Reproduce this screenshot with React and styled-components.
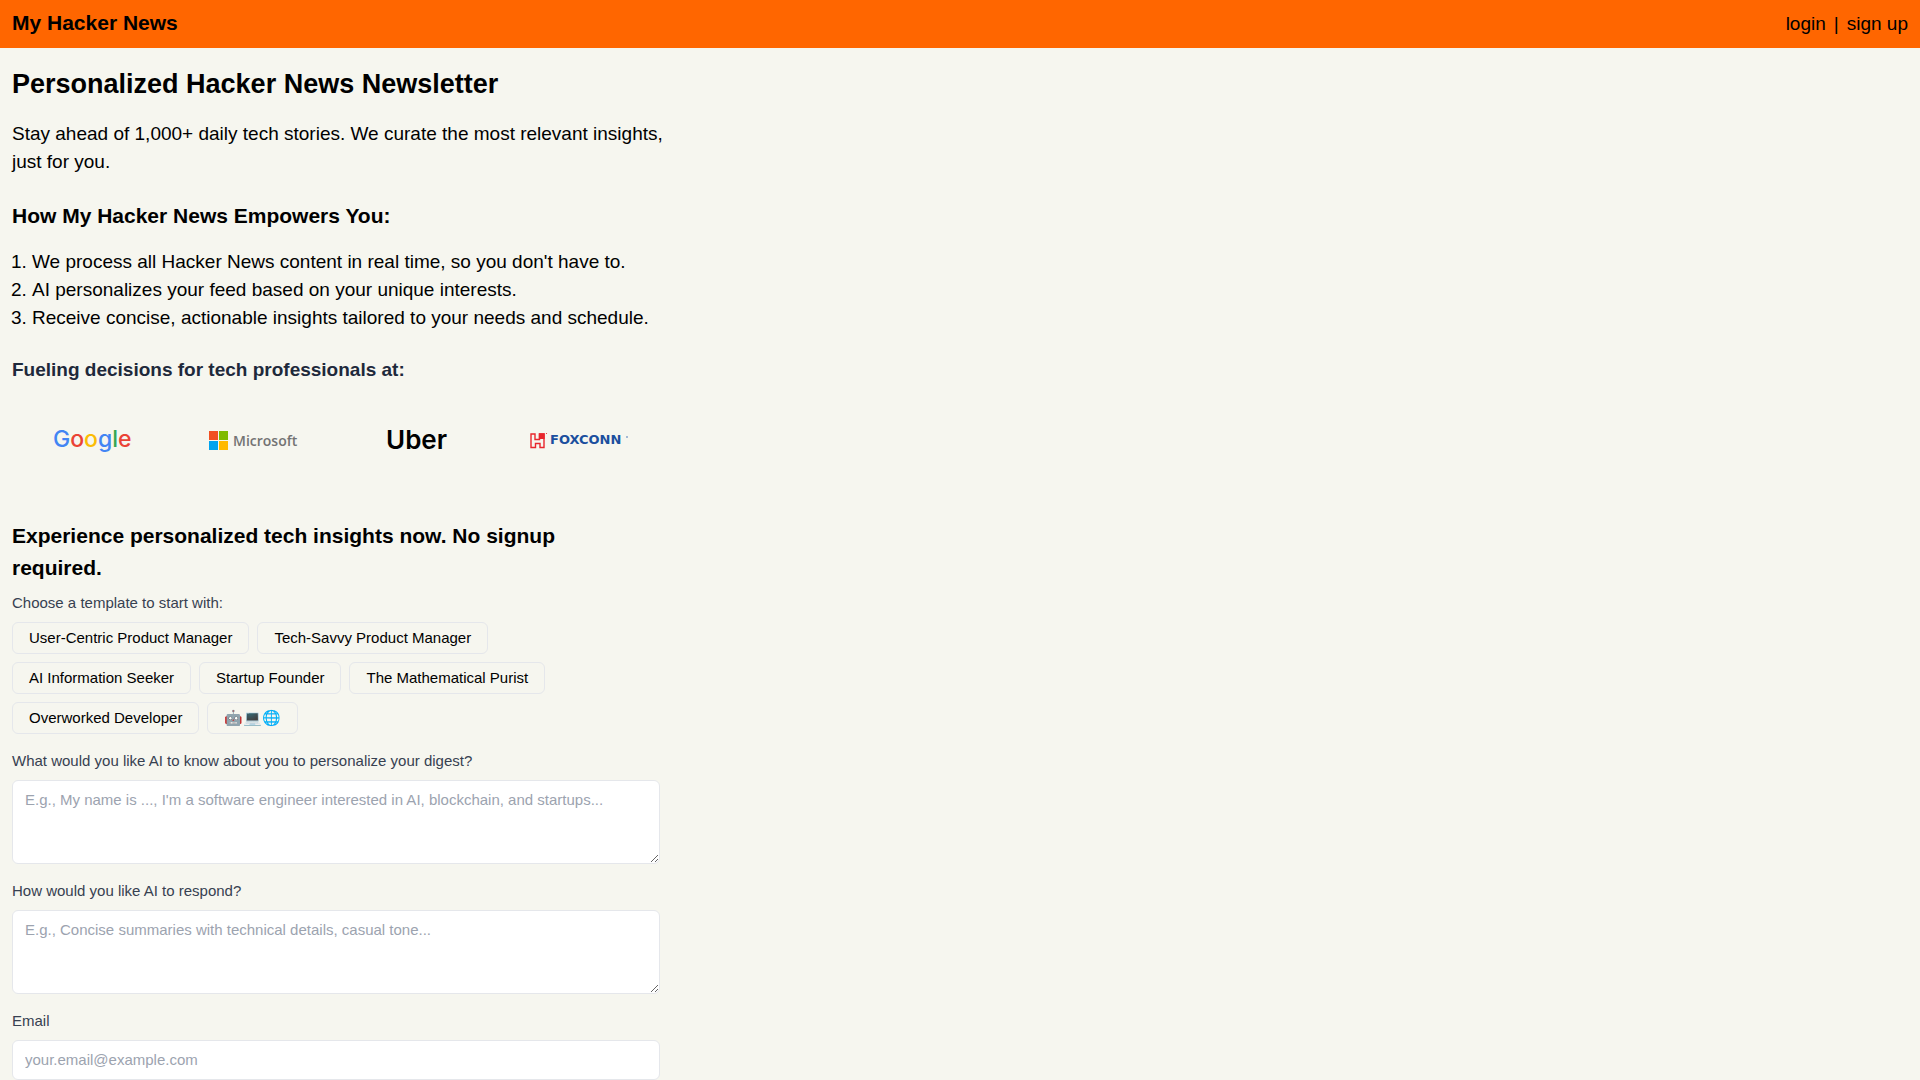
import React from "react";
import styled, { createGlobalStyle } from "styled-components";

const GlobalStyle = createGlobalStyle`
  *, *::before, *::after { box-sizing: border-box; }
  body {
    margin: 0;
    background: #f6f6ef;
    color: #000;
    font-family: "Liberation Sans", Arial, Helvetica, sans-serif;
    font-size: 19px;
    line-height: 28px;
  }
  h1, h2, h3, p, ol { margin: 0; }
`;

const Header = styled.header`
  display: flex;
  align-items: baseline;
  justify-content: space-between;
  padding: 7px 12px 9px;
  background: #ff6600;
`;

const Brand = styled.a`
  color: inherit;
  font-size: 21px;
  font-weight: 700;
  line-height: 32px;
  text-decoration: none;
`;

const AuthNav = styled.nav`
  display: flex;
  gap: 8px;
`;

const AuthLink = styled.a`
  color: inherit;
  text-decoration: none;
`;

const Main = styled.main`
  display: flex;
  flex-direction: column;
  gap: 24px;
  padding: 16px 12px 0;
`;

const Section = styled.section`
  display: flex;
  flex-direction: column;
  gap: 16px;
  max-width: 660px;
`;

const PageTitle = styled.h1`
  font-size: 27px;
  line-height: 40px;
`;

const SectionTitle = styled.h2`
  max-width: 600px;
  font-size: 21px;
  line-height: 32px;
`;

const Steps = styled.ol`
  padding-left: 20px;
`;

const Companies = styled.section`
  display: flex;
  flex-direction: column;
  max-width: 648px;
`;

const CompaniesTitle = styled.h3`
  color: #1e293b;
  font-size: 19px;
  line-height: 28px;
`;

const Logos = styled.div`
  display: grid;
  grid-template-columns: repeat(4, 1fr);
  place-items: center;
  padding: 32px 0;
`;

const Logo = styled.svg`
  display: block;
  width: 100px;
  height: 48px;
`;

const Form = styled.form`
  display: flex;
  flex-direction: column;
  gap: 16px;
  max-width: 648px;
`;

const Intro = styled.div`
  display: flex;
  flex-direction: column;
  gap: 8px;
`;

const Hint = styled.p`
  color: #374151;
  font-size: 15px;
  line-height: 22px;
`;

const Templates = styled.div`
  display: flex;
  flex-wrap: wrap;
  gap: 8px;
`;

const TemplateButton = styled.button`
  padding: 4px 16px;
  border: 1px solid #e5e7eb;
  border-radius: 6px;
  background: transparent;
  color: #000;
  font-family: inherit;
  font-size: 15px;
  line-height: 22px;
  cursor: pointer;
`;

const Field = styled.div`
  display: flex;
  flex-direction: column;
  gap: 8px;
`;

const Label = styled.label`
  color: #374151;
  font-size: 15px;
  line-height: 22px;
`;

const TextBox = styled.input`
  display: block;
  width: 100%;
  padding: 8px 12px;
  border: 1px solid #e5e7eb;
  border-radius: 6px;
  background: #fff;
  color: #000;
  font-family: inherit;
  font-size: 15px;
  line-height: 22px;
  &::placeholder { color: #9ca3af; opacity: 1; }
`;

const templates = [
  "User-Centric Product Manager",
  "Tech-Savvy Product Manager",
  "AI Information Seeker",
  "Startup Founder",
  "The Mathematical Purist",
  "Overworked Developer",
  "🤖💻🌐",
];

const steps = [
  "We process all Hacker News content in real time, so you don't have to.",
  "AI personalizes your feed based on your unique interests.",
  "Receive concise, actionable insights tailored to your needs and schedule.",
];

function GoogleLogo() {
  return (
    <Logo viewBox="0 0 100 48" role="img" aria-label="Google">
      <text x="10" y="31" fontFamily="Inter, sans-serif" fontSize="23" fontWeight="500">
        <tspan fill="#4285f4">G</tspan>
        <tspan fill="#ea4335">o</tspan>
        <tspan fill="#fbbc05">o</tspan>
        <tspan fill="#4285f4">g</tspan>
        <tspan fill="#34a853">l</tspan>
        <tspan fill="#ea4335">e</tspan>
      </text>
    </Logo>
  );
}

function MicrosoftLogo() {
  return (
    <Logo viewBox="0 0 100 48" role="img" aria-label="Microsoft">
      <rect x="4" y="15" width="9" height="9" fill="#f25022" />
      <rect x="14" y="15" width="9" height="9" fill="#7fba00" />
      <rect x="4" y="25" width="9" height="9" fill="#00a4ef" />
      <rect x="14" y="25" width="9" height="9" fill="#ffb900" />
      <text x="28" y="30" fontFamily="'Open Sans', sans-serif" fontSize="14" fontWeight="600" fill="#737373">
        Microsoft
      </text>
    </Logo>
  );
}

function UberLogo() {
  return (
    <Logo viewBox="0 0 100 48" role="img" aria-label="Uber">
      <text x="19" y="33" fontFamily="Inter, sans-serif" fontSize="26" fontWeight="600" fill="#000">
        Uber
      </text>
    </Logo>
  );
}

function FoxconnLogo() {
  return (
    <Logo viewBox="0 0 100 48" role="img" aria-label="Foxconn">
      <path
        d="M2 18H6V23.500H10.500V18H15V31.500H11V27.500H6.500V31.500H2Z"
        fill="none"
        stroke="#e8262d"
        strokeWidth="1.400"
      />
      <path d="M9.800 17.300H15.700V23H9.800Z" fill="#e8262d" />
      <circle cx="17.500" cy="17.500" r="0.600" fill="#e8262d" />
      <text x="21" y="28" fontFamily="'DejaVu Sans', sans-serif" fontSize="13" fontWeight="700" fill="#1b4f9e">
        FOXCONN
      </text>
      <circle cx="98" cy="21" r="1" fill="#8aa4cc" />
    </Logo>
  );
}

export default function App() {
  return (
    <>
      <GlobalStyle />
      <Header>
        <Brand href="#">My Hacker News</Brand>
        <AuthNav>
          <AuthLink href="#login">login</AuthLink>
          <span>|</span>
          <AuthLink href="#signup">sign up</AuthLink>
        </AuthNav>
      </Header>
      <Main>
        <Section>
          <PageTitle>Personalized Hacker News Newsletter</PageTitle>
          <p>
            Stay ahead of 1,000+ daily tech stories. We curate the most relevant insights, just for
            you.
          </p>
        </Section>
        <Section>
          <SectionTitle>How My Hacker News Empowers You:</SectionTitle>
          <Steps>
            {steps.map((step) => (
              <li key={step}>{step}</li>
            ))}
          </Steps>
        </Section>
        <Companies>
          <CompaniesTitle>Fueling decisions for tech professionals at:</CompaniesTitle>
          <Logos>
            <GoogleLogo />
            <MicrosoftLogo />
            <UberLogo />
            <FoxconnLogo />
          </Logos>
        </Companies>
        <Form>
          <Intro>
            <SectionTitle>Experience personalized tech insights now. No signup required.</SectionTitle>
            <Hint>Choose a template to start with:</Hint>
            <Templates>
              {templates.map((name) => (
                <TemplateButton type="button" key={name}>
                  {name}
                </TemplateButton>
              ))}
            </Templates>
          </Intro>
          <Field>
            <Label htmlFor="about">What would you like AI to know about you to personalize your digest?</Label>
            <TextBox
              as="textarea"
              id="about"
              rows={3}
              placeholder="E.g., My name is ..., I'm a software engineer interested in AI, blockchain, and startups..."
            />
          </Field>
          <Field>
            <Label htmlFor="respond">How would you like AI to respond?</Label>
            <TextBox
              as="textarea"
              id="respond"
              rows={3}
              placeholder="E.g., Concise summaries with technical details, casual tone..."
            />
          </Field>
          <Field>
            <Label htmlFor="email">Email</Label>
            <TextBox id="email" type="email" placeholder="your.email@example.com" />
          </Field>
        </Form>
      </Main>
    </>
  );
}
